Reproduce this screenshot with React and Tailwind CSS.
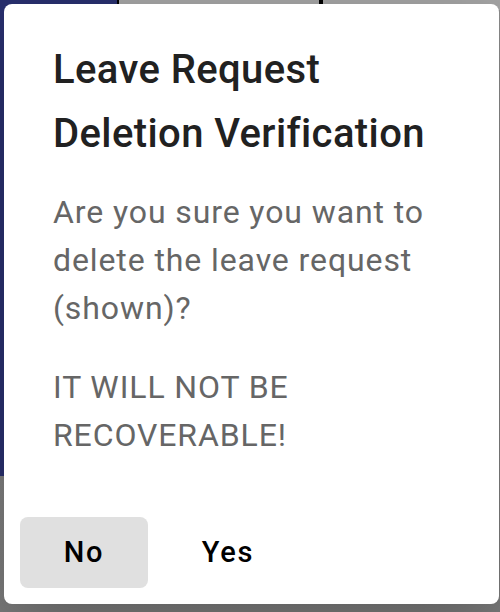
import React from "react";

export default function App() {
  return (
    <div className="relative w-[500px] h-[612px] overflow-hidden bg-gradient-to-b from-[#8e8e8e] to-[#7c7c7c]" style={{ fontFamily: "Roboto, 'Noto Sans', Arial, sans-serif" }}>
      {/* backdrop content */}
      <div className="flex items-start">
        <div className="w-[117px] h-[476px] bg-[#29306f]" />
        <div className="flex flex-1 h-[10px]">
          <div className="w-[2px] bg-black" />
          <div className="w-[200px] bg-[#a5a5a5]" />
          <div className="w-[4px] bg-black" />
          <div className="flex-1 bg-[#a5a5a5]" />
        </div>
      </div>

      {/* dialog */}
      <div className="absolute left-[4px] top-[4px] w-[495px] bg-white rounded-[8px] shadow-[0_22px_70px_rgba(0,0,0,0.25)] flex flex-col">
        <h2 className="pt-[34px] px-[49px] text-[40px] leading-[64px] font-medium text-[#212121] tracking-[0.4px]">
          Leave Request Deletion Verification
        </h2>
        <div className="px-[49px] pb-[42px] text-[32px] leading-[48px] text-[#666666] tracking-[0.9px]">
          <p className="mt-[22px]">Are you sure you want to delete the leave request (shown)?</p>
          <p className="mt-[31px]">IT WILL NOT BE RECOVERABLE!</p>
        </div>
        <div className="flex items-center gap-[16px] px-[16px] pt-[16px] pb-[16px]">
          <button className="w-[128px] h-[71px] rounded-[8px] bg-[#e0e0e0] text-[29px] font-medium tracking-[1.8px] text-black">
            No
          </button>
          <button className="w-[128px] h-[71px] rounded-[8px] text-[29px] font-medium tracking-[1.8px] text-black">
            Yes
          </button>
        </div>
      </div>
    </div>
  );
}
